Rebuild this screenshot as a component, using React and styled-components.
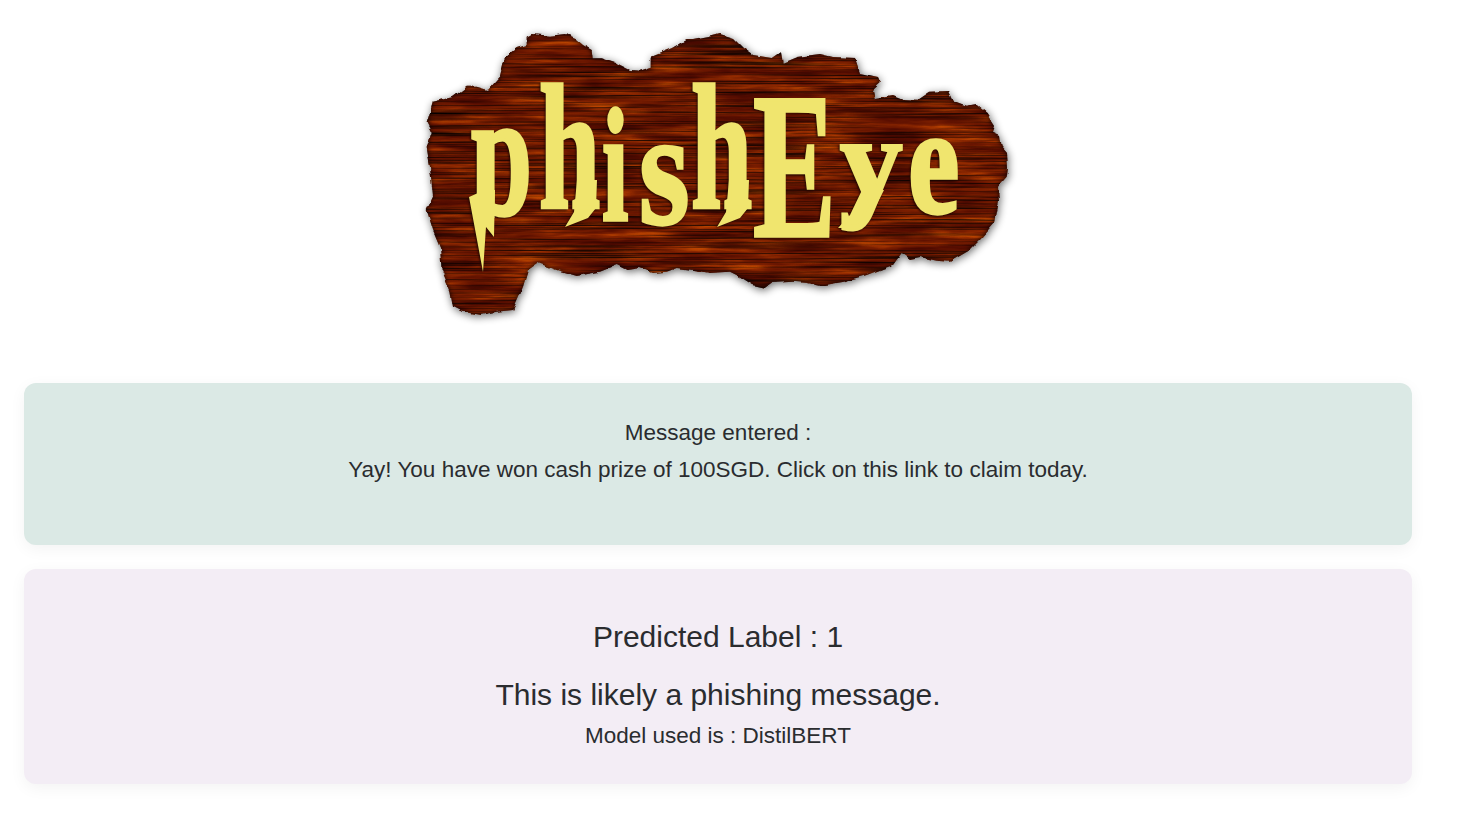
import React from "react";
import styled, { createGlobalStyle } from "styled-components";

const Global = createGlobalStyle`
  html, body { margin: 0; padding: 0; background: #fff; }
  body { font-family: "Liberation Sans", Arial, sans-serif; color: #2a2c2f; }
`;

const Page = styled.main`
  box-sizing: border-box;
  width: 1436px;
  padding: 20px 24px 0;
`;

const LogoWrap = styled.header`
  display: flex;
  justify-content: center;
  margin-bottom: 53px;
`;

const Card = styled.section`
  box-sizing: border-box;
  height: ${(p) => p.$height}px;
  padding-top: ${(p) => p.$top}px;
  margin-bottom: 24px;
  border-radius: 12px;
  background: ${(p) => p.$bg};
  box-shadow: 0 4px 16px rgba(0, 0, 0, 0.05);
  text-align: center;
`;

const Line = styled.div`
  font-size: 22.5px;
  line-height: 37px;
`;

const ModelLine = styled(Line)`
  margin-top: 1.5px;
`;

const Heading = styled.h3`
  margin: 0 0 ${(p) => p.$after}px;
  font-size: 30px;
  font-weight: 400;
  line-height: 40px;
`;

const Outline =
  "M526.7 36.7L531.7 34L550 35.7L565 34L575 38.3L583 45L591.7 50L592.7 58.3L601.7 58.3L616.7 63.3L630 70L640 70.7L651.7 66.7L651.7 56.7L673 48L686.7 40L693 40L710 36.7L720 34L733 38L743 48L753 55L771.7 58L780.7 51.7L782.7 62.7L796.7 57L820 54L833 57L855 58L860 73L878 77L880.7 83L873 90L875 99L893 96L903 100L916.7 100.7L930 91.7L948 91L953 101.7L966.7 106.7L976.7 105L986.7 113L995 126L993 131.7L1000 135L1001.7 146.7L1007 153L1008 166.7L1006.7 176.7L998 186.7L999 201.7L995 223L983 236.7L970 250L950 261.7L936.7 260.7L920 257L910 259L901.7 253L893 265L866.7 275L843 281.7L820 285.7L806.7 283L793 281.7L771.7 283L765 287.7L753 285L740 276.7L730 271.7L710 273L693 270L676.7 268L666.7 271.7L653 273L640 268L626.7 270L616.7 265L600 271.7L576.7 276L556.7 270L538 263L528 270L523 286.7L513 310L496.7 311.7L480 315L463 311.7L453 306.7L450 290L441.7 270L440 246.7L433 230L426.7 210L433 196.7L430 166.7L426.7 148L431.7 133L426.7 123L433 101.7L453 97L466.7 86.7L476.7 86.7L488 90L500 76.7L505 56.7L516.7 48L526.7 45Z";

const letters = [
  { c: "p", x: 471, y: 214, sx: 1.1, sy: 1.78, clip: true },
  { c: "h", x: 539, y: 208, sx: 1.1, sy: 1.78 },
  { c: "i", x: 602, y: 220, sx: 0.95, sy: 1.62 },
  { c: "s", x: 639, y: 223, sx: 1.3, sy: 1.64 },
  { c: "h", x: 691, y: 208, sx: 1.1, sy: 1.78 },
  { c: "E", x: 753, y: 236, sx: 1.24, sy: 2.08 },
  { c: "y", x: 840, y: 203, sx: 1.25, sy: 1.26 },
  { c: "e", x: 908, y: 213, sx: 1.16, sy: 1.54 },
];

const LogoLetter = styled.text`
  font-family: "Liberation Serif", serif;
  font-weight: 700;
  font-size: 100px;
  fill: #f0e56e;
  stroke: #f0e56e;
  stroke-width: 3px;
  stroke-linejoin: miter;
  vector-effect: non-scaling-stroke;
`;

const Flourish = styled.polygon`
  fill: #f0e56e;
`;

const Logo = () => (
  <svg width="616" height="310" viewBox="410 20 616 310" role="img" aria-label="phishEye logo">
    <defs>
      <filter id="wood" x="-5%" y="-5%" width="110%" height="115%" colorInterpolationFilters="sRGB">
        <feTurbulence type="fractalNoise" baseFrequency="0.09" numOctaves="2" seed="4" result="edgeNoise" />
        <feDisplacementMap in="SourceGraphic" in2="edgeNoise" scale="5" xChannelSelector="R" yChannelSelector="G" result="shape" />
        <feTurbulence type="fractalNoise" baseFrequency="0.014 0.13" numOctaves="4" seed="11" result="grain" />
        <feColorMatrix in="grain" type="matrix" values="1 0 0 0 0 1 0 0 0 0 1 0 0 0 0 0 0 0 0 1" result="gray" />
        <feComponentTransfer in="gray" result="tone">
          <feFuncR type="table" tableValues="0.22 0.25 0.3 0.36 0.42 0.48 0.58 0.7 0.8 0.8" />
          <feFuncG type="table" tableValues="0.02 0.03 0.04 0.06 0.09 0.12 0.17 0.25 0.3 0.3" />
          <feFuncB type="table" tableValues="0 0 0 0 0 0 0 0 0 0" />
        </feComponentTransfer>
        <feTurbulence type="fractalNoise" baseFrequency="0.006 0.6" numOctaves="2" seed="3" result="lineNoise" />
        <feColorMatrix in="lineNoise" type="matrix" values="2.2 0 0 0 -0.2 2.2 0 0 0 -0.2 2.2 0 0 0 -0.2 0 0 0 0 1" result="lines" />
        <feBlend in="tone" in2="lines" mode="multiply" result="woodTone" />
        <feComposite in="woodTone" in2="shape" operator="in" result="wood" />
        <feGaussianBlur in="shape" stdDeviation="2.5" result="edgeBlur" />
        <feFlood floodColor="#0c0100" result="dark" />
        <feComposite in="dark" in2="edgeBlur" operator="out" result="innerDark" />
        <feComposite in="innerDark" in2="shape" operator="in" result="inner" />
        <feGaussianBlur in="shape" stdDeviation="4" result="shadowBlur" />
        <feOffset in="shadowBlur" dx="1" dy="2" result="shadowOff" />
        <feComponentTransfer in="shadowOff" result="shadow">
          <feFuncR type="linear" slope="0" />
          <feFuncG type="linear" slope="0" />
          <feFuncB type="linear" slope="0" />
          <feFuncA type="linear" slope="0.6" />
        </feComponentTransfer>
        <feMerge>
          <feMergeNode in="shadow" />
          <feMergeNode in="wood" />
          <feMergeNode in="inner" />
        </feMerge>
      </filter>
      <filter id="raise" x="-5%" y="-5%" width="110%" height="110%" colorInterpolationFilters="sRGB">
        <feDropShadow dx="-1" dy="1" stdDeviation="1" floodColor="#200500" floodOpacity="0.95" />
      </filter>
      <clipPath id="pCut">
        <rect x="440" y="100" width="100" height="118" />
      </clipPath>
    </defs>
    <path d={Outline} fill="#000" filter="url(#wood)" />
    <g filter="url(#raise)">
      <Flourish points="478,190 495,190 494,237 486,227 483,272 469,197 478,193" />
      <Flourish points="577,180 597,180 596,208 588,218 565,227 574,212" />
      <Flourish points="729,180 749,180 748,208 740,218 717,227 726,212" />
      <Flourish points="862,190 884,190 868,222 856,228 838,228 850,215" />
      {letters.map((l, i) => (
        <g key={i} clipPath={l.clip ? "url(#pCut)" : undefined}>
          <LogoLetter transform={`translate(${l.x} ${l.y}) scale(${l.sx} ${l.sy})`}>
            {l.c}
          </LogoLetter>
        </g>
      ))}
    </g>
  </svg>
);

export default function App() {
  return (
    <Page>
      <Global />
      <LogoWrap>
        <Logo />
      </LogoWrap>
      <Card $bg="#dbe9e5" $height={162} $top={31}>
        <Line>Message entered :</Line>
        <Line>Yay! You have won cash prize of 100SGD. Click on this link to claim today.</Line>
      </Card>
      <Card $bg="#f3edf5" $height={215} $top={48}>
        <Heading $after={18}>Predicted Label : 1</Heading>
        <Heading $after={0}>This is likely a phishing message.</Heading>
        <ModelLine>Model used is : DistilBERT</ModelLine>
      </Card>
    </Page>
  );
}
